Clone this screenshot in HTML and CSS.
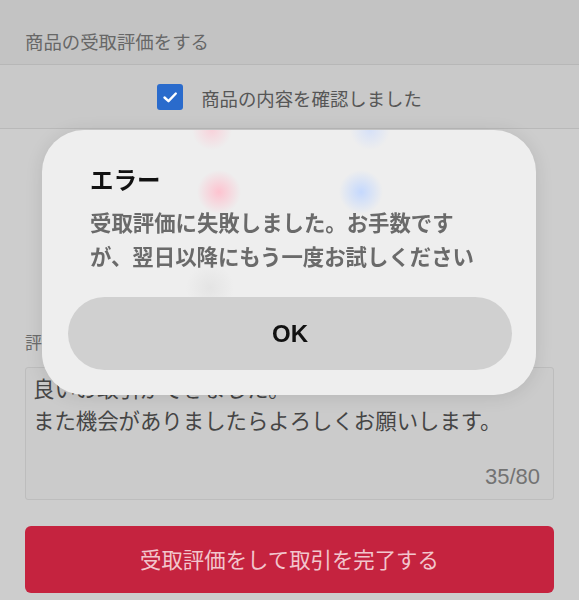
FILE: index.html
```html
<!DOCTYPE html>
<html lang="ja">
<head>
<meta charset="utf-8">
<title>受取評価</title>
<link rel="stylesheet" href="styles.css">
</head>
<body>
<div class="page">
  <div class="header">商品の受取評価をする</div>
  <div class="check-row">
    <span class="checkbox">
      <svg viewBox="0 0 26 26" width="26" height="26"><path d="M7.5 13.5 L11.5 17.2 L18.8 9.5" fill="none" stroke="#fff" stroke-width="2.4" stroke-linecap="round" stroke-linejoin="round"/></svg>
    </span>
    <span class="check-label">商品の内容を確認しました</span>
  </div>
  <div class="rating"></div>
  <div class="comment-label">評価コメント</div>
  <div class="textarea">
    <div class="ta-text">良いお取引ができました。<br>また機会がありましたらよろしくお願いします。</div>
    <div class="counter">35/80</div>
  </div>
  <div class="submit">受取評価をして取引を完了する</div>
</div>
<div class="dialog">
  <div class="dialog-title">エラー</div>
  <div class="dialog-msg">受取評価に失敗しました。お手数です<br>が、翌日以降にもう一度お試しください</div>
  <div class="dialog-btn">OK</div>
</div>
</body>
</html>
```
FILE: styles.css
```css
* { box-sizing: border-box; }
html, body { margin: 0; padding: 0; }
body {
  width: 579px;
  height: 600px;
  overflow: hidden;
  background: #cdcdcd;
  font-family: "Noto Sans CJK JP", "Noto Sans", sans-serif;
}
.page { display: flex; flex-direction: column; }
.header {
  height: 65px;
  background: #c3c3c3;
  border-bottom: 1px solid #b7b7b7;
  padding: 28px 0 0 25px;
  font-size: 18.4px;
  line-height: 26px;
  color: #676767;
}
.check-row {
  height: 64px;
  background: #c9c9c9;
  border-bottom: 1px solid #b9b9b9;
  display: flex;
  align-items: center;
  justify-content: center;
  gap: 18px;
}
.checkbox {
  width: 26px;
  height: 26px;
  border-radius: 3px;
  background: #2a6bcc;
  display: flex;
}
.check-label {
  font-size: 18.4px;
  line-height: 26px;
  color: #565656;
  padding-top: 2px;
}
.rating { height: 200px; }
.comment-label {
  padding-left: 25px;
  font-size: 17px;
  line-height: 24px;
  color: #6c6c6c;
  margin-top: 1px;
}
.textarea {
  margin: 13px 25px 0 25px;
  height: 133px;
  border: 1px solid #bdbdbd;
  border-radius: 3px;
  background: #cbcbcb;
  padding: 4px 8px 0 7px;
  display: flex;
  flex-direction: column;
}
.ta-text {
  font-size: 21.4px;
  line-height: 32px;
  color: #454545;
  flex: 1;
}
.counter {
  align-self: flex-end;
  font-family: "Liberation Sans", Arial, sans-serif;
  font-size: 22px;
  line-height: 24px;
  color: #737373;
  padding-bottom: 10px;
  margin-right: 5px;
}
.submit {
  margin: 26px 25px 0 25px;
  height: 67px;
  border-radius: 6px;
  background: #c5233f;
  color: #f2c6cd;
  font-size: 21.4px;
  display: flex;
  align-items: center;
  justify-content: center;
  padding-bottom: 2px;
}
.dialog {
  position: fixed;
  left: 42px;
  top: 130px;
  width: 494px;
  height: 265px;
  border-radius: 42px;
  background:
    radial-gradient(circle 22px at 177px 62px, rgba(255,190,204,0.9), rgba(255,190,204,0.5) 45%, rgba(255,190,204,0) 100%),
    radial-gradient(circle 22px at 319px 62px, rgba(192,214,255,0.9), rgba(192,214,255,0.5) 45%, rgba(192,214,255,0) 100%),
    radial-gradient(circle 20px at 170px 0px, rgba(255,192,206,0.6), rgba(255,192,206,0) 100%),
    radial-gradient(circle 20px at 328px 0px, rgba(198,216,255,0.6), rgba(198,216,255,0) 100%),
    radial-gradient(circle 24px at 168px 158px, rgba(205,205,205,0.3), rgba(205,205,205,0) 100%),
    #eeeeee;
  box-shadow: 0 2px 18px rgba(0,0,0,0.10);
  padding: 35px 24px 25px 26px;
  display: flex;
  flex-direction: column;
}
.dialog-title {
  padding-left: 22px;
  font-size: 23.5px;
  line-height: 28px;
  font-weight: 700;
  color: #111;
}
.dialog-msg {
  padding-left: 22px;
  margin-top: 12px;
  font-size: 21.4px;
  line-height: 34px;
  font-weight: 700;
  color: #6a6a6a;
  white-space: nowrap;
}
.dialog-btn {
  margin-top: auto;
  height: 73px;
  border-radius: 37px;
  background: #d0d0d0;
  display: flex;
  align-items: center;
  justify-content: center;
  font-family: "Liberation Sans", Arial, sans-serif;
  font-weight: 700;
  font-size: 24px;
  color: #111;
}
```
